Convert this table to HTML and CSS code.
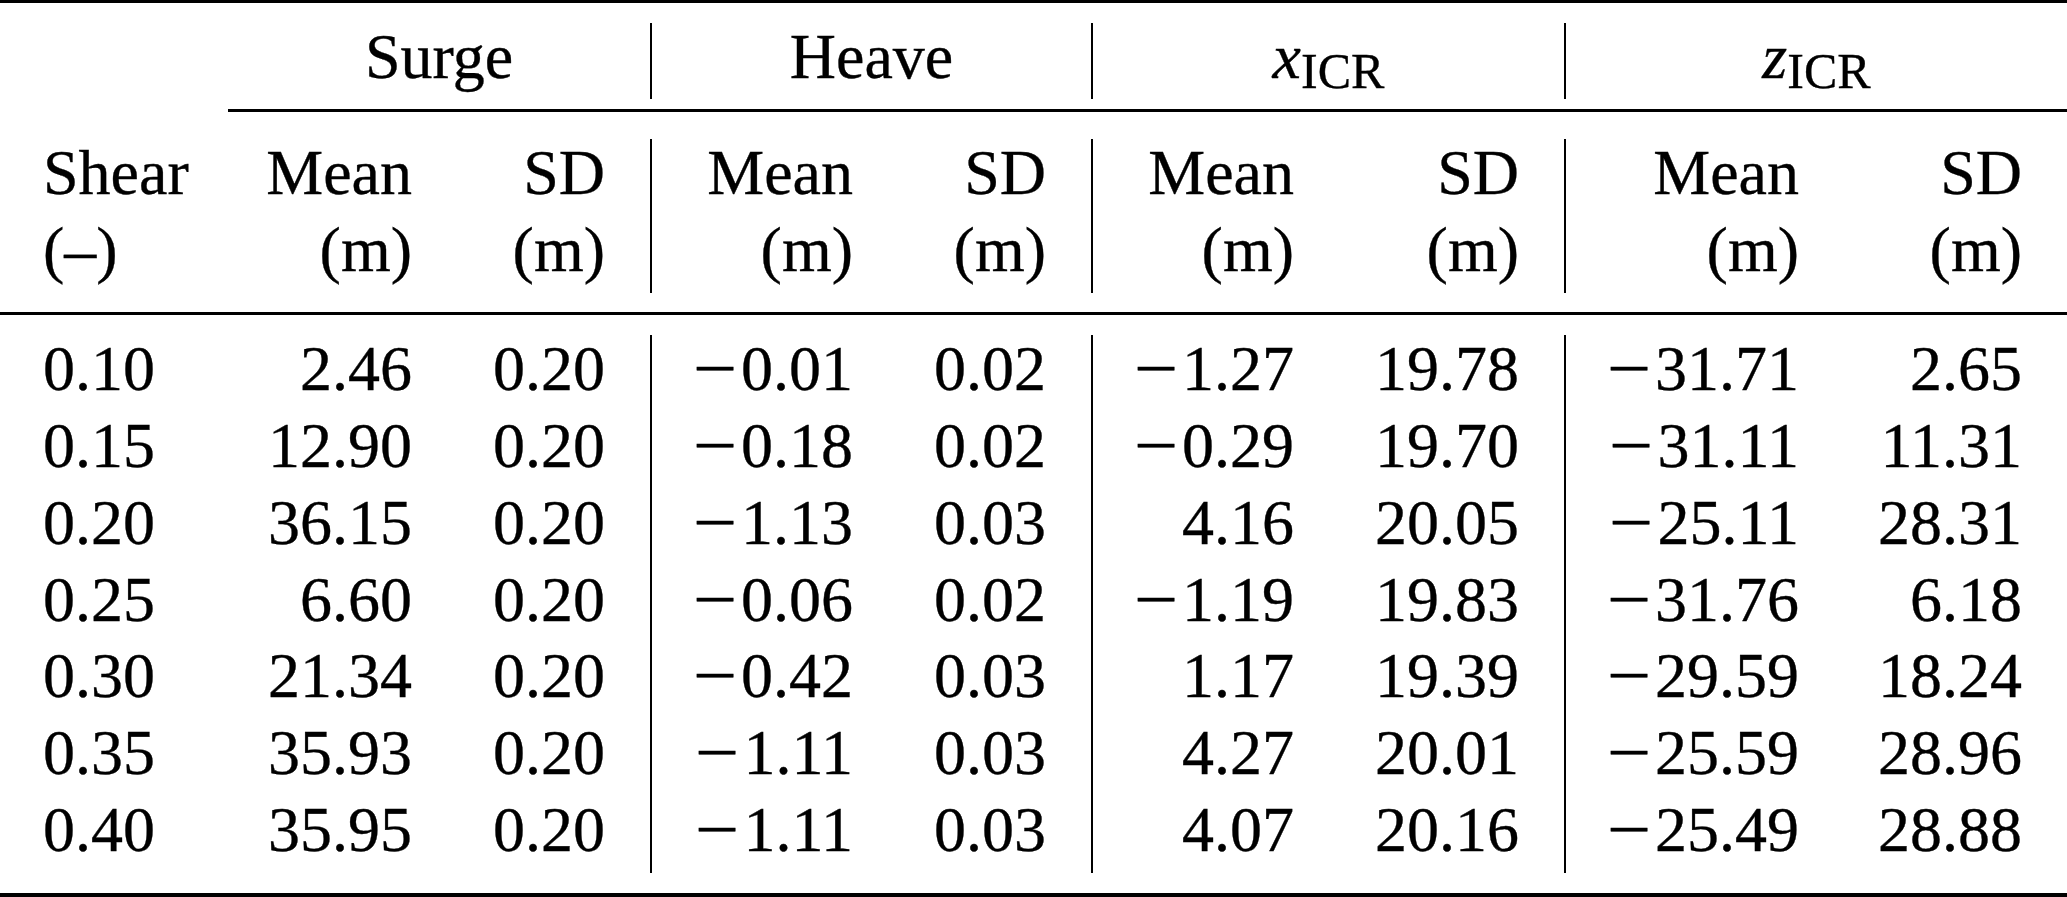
FILE: index.html
```html
<!DOCTYPE html>
<html lang="en">
<head>
<meta charset="utf-8">
<title>Table</title>
<link rel="stylesheet" href="styles.css">
</head>
<body>
<table class="tbl">
  <colgroup>
    <col class="c-a"><col class="c-b"><col class="c-c"><col class="c-d"><col class="c-e"><col class="c-f"><col class="c-g"><col class="c-h"><col class="c-i">
  </colgroup>
  <thead>
    <tr class="rule-row r-top"><td colspan="9"><div class="rule heavy"></div></td></tr>
    <tr class="grp">
      <th></th>
      <th colspan="2">Surge</th>
      <th colspan="2" class="vl">Heave</th>
      <th colspan="2" class="vl"><i>x</i><span class="sub">ICR</span></th>
      <th colspan="2" class="vl"><i>z</i><span class="sub">ICR</span></th>
    </tr>
    <tr class="rule-row r-cmid"><td></td><td colspan="8"><div class="rule cmid"></div></td></tr>
    <tr class="hdr">
      <th class="first"><span class="ln">Shear</span><span class="ln">(–)</span></th>
      <th><span class="ln">Mean</span><span class="ln">(m)</span></th>
      <th><span class="ln">SD</span><span class="ln">(m)</span></th>
      <th class="vl"><span class="ln">Mean</span><span class="ln">(m)</span></th>
      <th><span class="ln">SD</span><span class="ln">(m)</span></th>
      <th class="vl"><span class="ln">Mean</span><span class="ln">(m)</span></th>
      <th><span class="ln">SD</span><span class="ln">(m)</span></th>
      <th class="vl"><span class="ln">Mean</span><span class="ln">(m)</span></th>
      <th><span class="ln">SD</span><span class="ln">(m)</span></th>
    </tr>
    <tr class="rule-row r-mid"><td colspan="9"><div class="rule mid"></div></td></tr>
  </thead>
  <tbody>
    <tr><td class="first">0.10</td><td>2.46</td><td>0.20</td><td class="vl"><span class="neg">−</span>0.01</td><td>0.02</td><td class="vl"><span class="neg">−</span>1.27</td><td>19.78</td><td class="vl"><span class="neg">−</span>31.71</td><td>2.65</td></tr>
    <tr><td class="first">0.15</td><td>12.90</td><td>0.20</td><td class="vl"><span class="neg">−</span>0.18</td><td>0.02</td><td class="vl"><span class="neg">−</span>0.29</td><td>19.70</td><td class="vl"><span class="neg">−</span>31.11</td><td>11.31</td></tr>
    <tr><td class="first">0.20</td><td>36.15</td><td>0.20</td><td class="vl"><span class="neg">−</span>1.13</td><td>0.03</td><td class="vl">4.16</td><td>20.05</td><td class="vl"><span class="neg">−</span>25.11</td><td>28.31</td></tr>
    <tr><td class="first">0.25</td><td>6.60</td><td>0.20</td><td class="vl"><span class="neg">−</span>0.06</td><td>0.02</td><td class="vl"><span class="neg">−</span>1.19</td><td>19.83</td><td class="vl"><span class="neg">−</span>31.76</td><td>6.18</td></tr>
    <tr><td class="first">0.30</td><td>21.34</td><td>0.20</td><td class="vl"><span class="neg">−</span>0.42</td><td>0.03</td><td class="vl">1.17</td><td>19.39</td><td class="vl"><span class="neg">−</span>29.59</td><td>18.24</td></tr>
    <tr><td class="first">0.35</td><td>35.93</td><td>0.20</td><td class="vl"><span class="neg">−</span>1.11</td><td>0.03</td><td class="vl">4.27</td><td>20.01</td><td class="vl"><span class="neg">−</span>25.59</td><td>28.96</td></tr>
    <tr><td class="first">0.40</td><td>35.95</td><td>0.20</td><td class="vl"><span class="neg">−</span>1.11</td><td>0.03</td><td class="vl">4.07</td><td>20.16</td><td class="vl"><span class="neg">−</span>25.49</td><td>28.88</td></tr>
  </tbody>
  <tfoot>
    <tr class="rule-row r-bot"><td colspan="9"><div class="rule heavy-b"></div></td></tr>
  </tfoot>
</table>
</body>
</html>
```

FILE: styles.css
```css
html, body {
  margin: 0;
  padding: 0;
  background: #fff;
}

body {
  font-family: "Liberation Serif", "Times New Roman", serif;
  font-size: 64px;
  color: #000;
  -webkit-text-stroke: 0.35px #000;
}

.tbl {
  border-collapse: separate;
  border-spacing: 0;
  table-layout: fixed;
  width: 2067px;
}

.c-a { width: 228px; }
.c-b { width: 229px; }
.c-c { width: 193px; }
.c-d { width: 248px; }
.c-e { width: 193px; }
.c-f { width: 248px; }
.c-g { width: 225px; }
.c-h { width: 280px; }
.c-i { width: 223px; }

th, td {
  padding: 0 45px 0 0;
  font-weight: normal;
  text-align: right;
  vertical-align: top;
  line-height: 67px;
  white-space: nowrap;
}

tbody td {
  height: 76.8px;
}

th.first, td.first {
  text-align: left;
  padding: 0 0 0 43px;
}

.vl {
  border-left: 2px solid #000;
}

.grp th {
  text-align: center;
  padding: 0;
  height: 76.8px;
}

.sub {
  font-size: 50px;
  vertical-align: -10.4px;
  line-height: 0;
}

.neg {
  display: inline-block;
  transform: scaleX(1.22);
  margin-right: 8px;
}

.ln {
  display: block;
  height: 76.8px;
}

.rule-row td {
  padding: 0;
  line-height: 0;
  font-size: 0;
  height: auto;
}

.rule {
  background: #000;
  width: 100%;
}

.r-top td { padding-bottom: 19.7px; }
.heavy { height: 3px; }

.r-cmid td { padding-top: 9.2px; padding-bottom: 27.6px; }
.cmid { height: 3px; }

.r-mid td { padding-top: 19.4px; padding-bottom: 20px; }
.mid { height: 3px; }

.r-bot td { padding-top: 20.4px; }
.heavy-b { height: 4px; }
```
